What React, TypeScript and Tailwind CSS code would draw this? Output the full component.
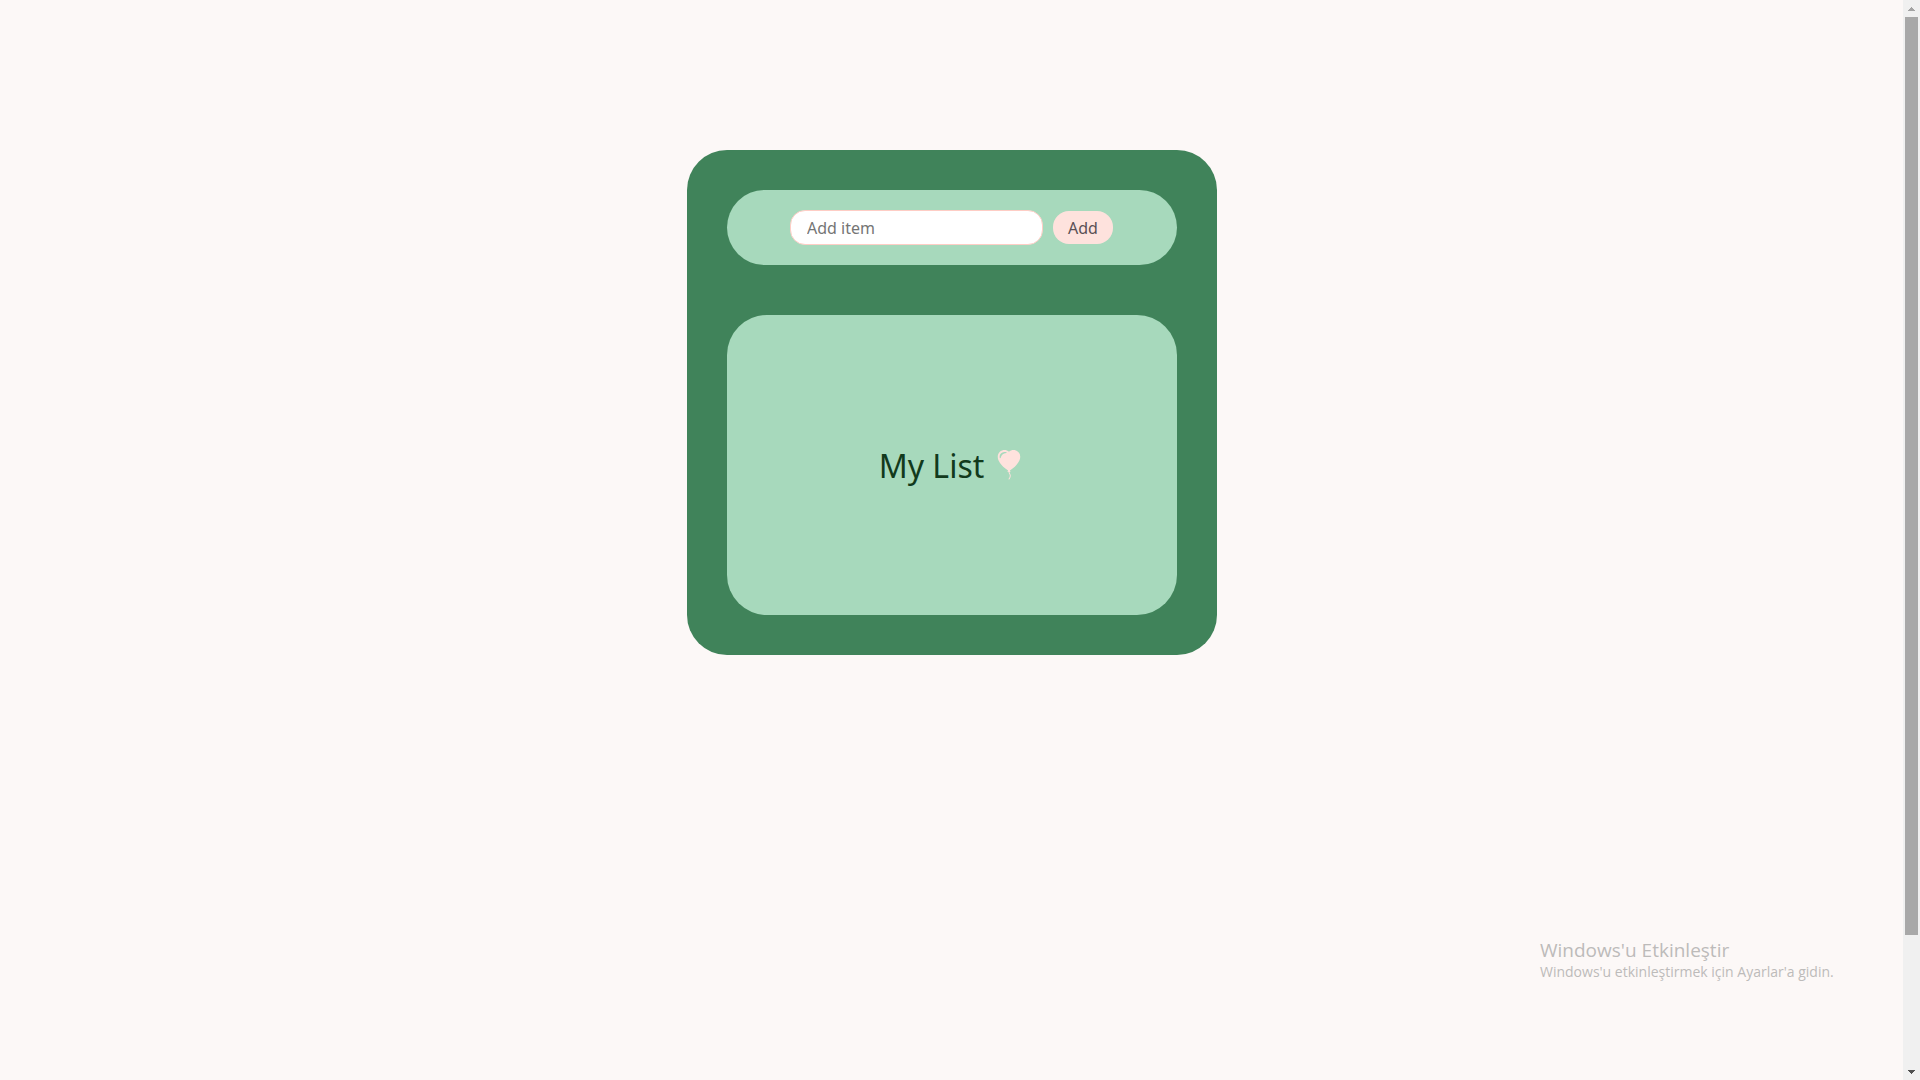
import { useState } from "react";
import type { FormEvent } from "react";
import { BsBalloonHeartFill } from "react-icons/bs";

function Scrollbar() {
  return (
    <div aria-hidden="true" className="flex w-[17px] shrink-0 flex-col items-center bg-[#f0f0f0]">
      <div className="flex h-[17px] items-center justify-center">
        <svg width="7" height="4" viewBox="0 0 7 4" shapeRendering="crispEdges" fill="#a3a3a3">
          <path d="M3 0h1v1h1v1h1v1h1v1H0V3h1V2h1V1h1z" />
        </svg>
      </div>
      <div className="flex w-full grow flex-col items-center">
        <div className="w-[13px] grow-[918] bg-[#a8a8a8]" />
        <div className="grow-[128]" />
      </div>
      <div className="flex h-[17px] items-center justify-center">
        <svg width="7" height="4" viewBox="0 0 7 4" shapeRendering="crispEdges" fill="#505050">
          <path d="M0 0h7v1H6v1H5v1H4v1H3V3H2V2H1V1H0z" />
        </svg>
      </div>
    </div>
  );
}

function ActivationNotice() {
  return (
    <div className="pointer-events-none absolute right-20 bottom-[98px] w-[300px] font-['Open_Sans','Noto_Sans',sans-serif] whitespace-nowrap text-[#bdbbba]">
      <p className="text-[19px] leading-6">Windows'u Etkinleştir</p>
      <p className="text-sm leading-5">Windows'u etkinleştirmek için Ayarlar'a gidin.</p>
    </div>
  );
}

export default function App() {
  const [text, setText] = useState("");
  const [items, setItems] = useState<string[]>([]);

  const addItem = (event: FormEvent) => {
    event.preventDefault();
    const value = text.trim();
    if (!value) return;
    setItems([...items, value]);
    setText("");
  };

  return (
    <div className="relative flex min-h-screen bg-[#fcf8f7] font-['Comic_Sans_MS','Noto_Sans',sans-serif]">
      <main className="flex grow items-start justify-center pt-[150px]">
        <div className="flex w-full max-w-[530px] flex-col gap-[50px] rounded-[40px] bg-[#40835a] p-10">
          <form
            onSubmit={addItem}
            className="flex items-center justify-center gap-2.5 rounded-[40px] bg-[#a7d9bc] p-5"
          >
            <input
              type="text"
              aria-label="Add item"
              placeholder="Add item"
              value={text}
              onChange={(event) => setText(event.target.value)}
              className="h-[35px] w-[253px] rounded-[15px] border border-[#fecdc5] bg-white px-4 text-base text-[#333333] outline-none placeholder:text-[#757575]"
            />
            <button
              type="submit"
              className="h-[33px] w-[60px] rounded-[16px] bg-[#fee2dd] text-base text-[#5a5055]"
            >
              Add
            </button>
          </form>
          <section className="flex min-h-[300px] flex-col items-center justify-center rounded-[40px] bg-[#a7d9bc]">
            <h1 className="flex items-center gap-2.5 text-[32px] leading-[45px] text-[#123a1c]">
              My List
              <BsBalloonHeartFill aria-hidden="true" className="size-[30px] text-[#fee2dd]" />
            </h1>
            {items.length > 0 && (
              <ul className="text-base text-[#123a1c]">
                {items.map((item, index) => (
                  <li key={index}>{item}</li>
                ))}
              </ul>
            )}
          </section>
        </div>
      </main>
      <Scrollbar />
      <ActivationNotice />
    </div>
  );
}
